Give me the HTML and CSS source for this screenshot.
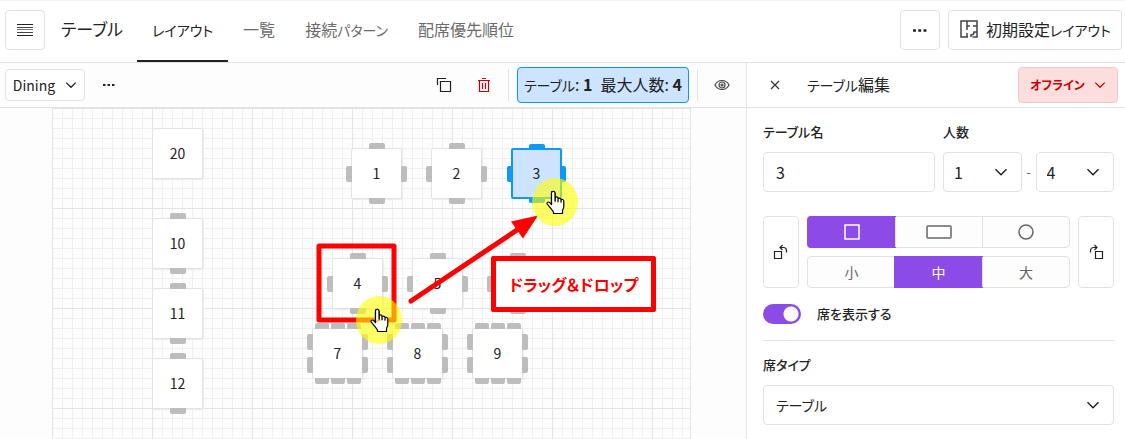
FILE: index.html
```html
<!DOCTYPE html>
<html lang="ja">
<head>
<meta charset="utf-8">
<title>テーブル</title>
<link rel="stylesheet" href="styles.css">
</head>
<body>
<svg class="defs" width="0" height="0" aria-hidden="true">
  <symbol id="chevron" viewBox="0 0 14 14"><path d="M1.500 4.200 7 9.700l5.500-5.500" fill="none" stroke="currentColor" stroke-width="1.500"/></symbol>
  <symbol id="dots" viewBox="0 0 12 4"><path d="M0 1h2.500v2H0zM4.500 1H7v2H4.500zM9 1h2.500v2H9z" fill="currentColor"/></symbol>
  <symbol id="hand" viewBox="0 0 19 25"><path d="M5.500 14.500V3.200C5.500.6 9 .6 9 3.200V9.500M9 11.500V8.200c0-1.700 2.800-1.700 3 0v3.600M12 9.300c.3-1.600 2.800-1.500 3 .2v2.700M15 10.300c.5-1.400 2.800-1 2.800.7v5.500c0 1.800-1.300 3-1.300 4.500v2.500H7.500v-1.500C6 19.500 3.200 16.500 1.300 14.200c-1-1.500.8-2.800 2.200-1.800l2 2.100" fill="#fff" stroke="#000" stroke-width="1.200" stroke-linejoin="round" stroke-linecap="round"/><path d="M5.500 14V3.200C5.500.6 9 .6 9 3.200V11" fill="#fff" stroke="#000" stroke-width="1.200"/></symbol>
</svg>

<header class="topbar">
  <button class="btn icon-btn" aria-label="メニュー">
    <svg width="16" height="13" viewBox="0 0 16 13"><path d="M0 .5h16M0 11.500h16" stroke="#222"/><path d="M0 3.500h16M0 8.500h16" stroke="#444"/><path d="M0 5.500h16" stroke="#777"/></svg>
  </button>
  <h1 class="title">テーブル</h1>
  <nav class="tabs">
    <a class="tab active" href="#layout"><span class="kana">レイアウト</span></a>
    <a class="tab" href="#list">一覧</a>
    <a class="tab" href="#patterns">接続<span class="kana">パターン</span></a>
    <a class="tab" href="#priority">配席優先順位</a>
  </nav>
  <div class="actions">
    <button class="btn icon-btn" aria-label="その他"><svg width="14" height="5"><use href="#dots"/></svg></button>
    <button class="btn preset">
      <svg width="18" height="18" viewBox="0 0 18 18" fill="none" stroke="#444" stroke-width="1.500"><path d="M12.500 17H17v-5h-3c0 2-1 3-3 3v2M17 12V1H1v16h7M7 17v-4M7 1v9M7 6h3M13 6h4"/></svg>
      <span>初期設定<span class="kana">レイアウト</span></span>
    </button>
  </div>
</header>

<div class="workspace">
  <main class="editor">
    <div class="toolbar">
      <button class="btn area">Dining <svg width="12" height="12"><use href="#chevron"/></svg></button>
      <button class="tool more" aria-label="エリア操作"><svg width="12" height="4"><use href="#dots"/></svg></button>
      <div class="tools">
        <button class="tool" aria-label="複製"><svg width="16" height="16" viewBox="0 0 16 16" fill="none" stroke="#222" stroke-width="1.200"><path d="M4.500 4.500h10v10h-10zM1.500 8V1.500H10"/></svg></button>
        <button class="tool" aria-label="削除"><svg width="14" height="16" viewBox="0 0 14 16" fill="none" stroke="#c00" stroke-width="1.200"><path d="M1 3.500h12M2.500 3.500v11h9v-11M5 1.500h4M5.500 6v6M8.500 6v6"/></svg></button>
        <div class="divider"></div>
        <div class="summary"><span><span class="kana">テーブル</span>: <b>1</b></span><span>最大人数: <b>4</b></span></div>
        <div class="divider"></div>
        <button class="tool" aria-label="表示"><svg width="16" height="12" viewBox="0 0 16 12" fill="none" stroke="#444" stroke-width="1.200"><path d="M1 6c3-6 11-6 14 0-3 6-11 6-14 0z"/><circle cx="8" cy="6" r="3"/><circle cx="8" cy="6" r="1"/></svg></button>
      </div>
    </div>
    <div class="stage">
      <div class="canvas">
        <div class="table t20">20</div>
        <div class="table t10">10<i class="seats top"><i></i></i><i class="seats bottom"><i></i></i></div>
        <div class="table t11">11<i class="seats top"><i></i></i><i class="seats bottom"><i></i></i></div>
        <div class="table t12">12<i class="seats top"><i></i></i><i class="seats bottom"><i></i></i></div>
        <div class="table t1">1<i class="seats top"><i></i></i><i class="seats bottom"><i></i></i><i class="seats left"><i></i></i><i class="seats right"><i></i></i></div>
        <div class="table t2">2<i class="seats top"><i></i></i><i class="seats bottom"><i></i></i><i class="seats left"><i></i></i><i class="seats right"><i></i></i></div>
        <div class="table t3 selected">3<i class="seats top"><i></i></i><i class="seats bottom"><i></i></i><i class="seats left"><i></i></i><i class="seats right"><i></i></i></div>
        <div class="table t4">4<i class="seats top"><i></i></i><i class="seats bottom"><i></i></i><i class="seats left"><i></i></i><i class="seats right"><i></i></i></div>
        <div class="table t5">5<i class="seats top"><i></i></i><i class="seats bottom"><i></i></i><i class="seats left"><i></i></i><i class="seats right"><i></i></i></div>
        <div class="table t6"><i class="seats top"><i></i></i><i class="seats bottom"><i></i></i><i class="seats left"><i></i></i><i class="seats right"><i></i></i></div>
        <div class="table large t7">7<i class="seats top"><i></i><i></i><i></i></i><i class="seats bottom"><i></i><i></i><i></i></i><i class="seats left"><i></i><i></i></i><i class="seats right"><i></i><i></i></i></div>
        <div class="table large t8">8<i class="seats top"><i></i><i></i><i></i></i><i class="seats bottom"><i></i><i></i><i></i></i><i class="seats left"><i></i><i></i></i><i class="seats right"><i></i><i></i></i></div>
        <div class="table large t9">9<i class="seats top"><i></i><i></i><i></i></i><i class="seats bottom"><i></i><i></i><i></i></i><i class="seats left"><i></i><i></i></i><i class="seats right"><i></i><i></i></i></div>

        <svg class="marks" width="640" height="331" viewBox="52 108 640 331" aria-hidden="true">
          <rect x="319" y="246" width="75" height="74" fill="none" stroke="#f00" stroke-width="5" stroke-linejoin="round"/>
          <path d="M411 301 520 228" stroke="#f00" stroke-width="5" stroke-linecap="round"/>
          <path d="M538 215.500 511 221.500 523 238.500z" fill="#f00"/>
          <ellipse cx="555" cy="202" rx="23" ry="24" fill="#ff0" fill-opacity=".6"/>
          <ellipse cx="379" cy="320" rx="23" ry="24" fill="#ff0" fill-opacity=".6"/>
          <use href="#hand" x="546" y="190" width="19" height="25"/>
          <use href="#hand" x="370" y="308" width="19" height="25"/>
        </svg>
        <div class="callout">ドラッグ＆ドロップ</div>
      </div>
    </div>
  </main>

  <aside class="panel">
    <div class="panel-head">
      <button class="tool" aria-label="閉じる"><svg width="10" height="10" viewBox="0 0 10 10" stroke="#333" stroke-width="1.200"><path d="m1 1 8 8M9 1 1 9"/></svg></button>
      <h2 class="panel-title"><span class="kana">テーブル</span>編集</h2>
      <button class="btn status">オフライン <svg width="12" height="12"><use href="#chevron"/></svg></button>
    </div>
    <form class="form">
      <div class="fields">
        <div class="field name">
          <label for="name">テーブル名</label>
          <input class="control" id="name" type="text" value="3">
        </div>
        <div class="field people">
          <label for="min">人数</label>
          <div class="range">
            <span class="select"><select class="control" id="min"><option>1</option></select><svg width="14" height="14"><use href="#chevron"/></svg></span>
            <span class="dash">-</span>
            <span class="select"><select class="control" aria-label="最大人数"><option>4</option></select><svg width="14" height="14"><use href="#chevron"/></svg></span>
          </div>
        </div>
      </div>
      <div class="shape">
        <button type="button" class="btn rotate" aria-label="左に回転"><svg width="16" height="16" viewBox="0 0 16 16" fill="none" stroke="#222" stroke-width="1.200"><path d="M1.500 7.500h7v7h-7zM7 3.500h3.500a3 3 0 0 1 3 3v2M9.500 1 7 3.500 9.500 6"/></svg></button>
        <div class="groups">
          <div class="segments">
            <button type="button" class="segment on" aria-label="正方形"><svg width="16" height="16" fill="none" stroke="currentColor" stroke-width="1.500"><rect x="1" y="1" width="14" height="14"/></svg></button>
            <button type="button" class="segment" aria-label="長方形"><svg width="26" height="16" fill="none" stroke="currentColor" stroke-width="1.500"><rect x="1" y="2" width="24" height="12" rx="1"/></svg></button>
            <button type="button" class="segment" aria-label="円形"><svg width="16" height="16" fill="none" stroke="currentColor" stroke-width="1.500"><circle cx="8" cy="8" r="7"/></svg></button>
          </div>
          <div class="segments">
            <button type="button" class="segment">小</button>
            <button type="button" class="segment on">中</button>
            <button type="button" class="segment">大</button>
          </div>
        </div>
        <button type="button" class="btn rotate" aria-label="右に回転"><svg width="16" height="16" viewBox="0 0 16 16" fill="none" stroke="#222" stroke-width="1.200"><path d="M7.500 7.500h7v7h-7zM9 3.500H5.500a3 3 0 0 0-3 3v2M6.500 1 9 3.500 6.500 6"/></svg></button>
      </div>
      <label class="switch"><input type="checkbox" checked>席を表示する</label>
      <div class="field type">
        <label for="type">席タイプ</label>
        <span class="select"><select class="control kana" id="type"><option>テーブル</option></select><svg width="14" height="14"><use href="#chevron"/></svg></span>
      </div>
    </form>
  </aside>
</div>
</body>
</html>
```

FILE: styles.css
```css
* { box-sizing: border-box; }

body {
  margin: 0;
  min-height: 100vh;
  display: flex;
  flex-direction: column;
  overflow: hidden;
  background: #fff;
  color: #222;
  font: 16px/20px "Noto Sans CJK JP", sans-serif;
  font-feature-settings: "palt";
}

button, input, select {
  font: inherit;
  font-feature-settings: inherit;
  color: inherit;
}

button { padding: 0; cursor: pointer; }
svg { flex: none; display: block; }
.defs { position: absolute; }
.kana { font-size: 14px; }

.btn {
  display: flex;
  align-items: center;
  justify-content: center;
  border: 1px solid #e2e2e2;
  border-radius: 4px;
  background: #fff;
}

/* Top bar */
.topbar {
  display: flex;
  align-items: flex-start;
  height: 63px;
  padding: 9px 3px 0 5px;
  border-top: 1px solid #f4f4f4;
  border-bottom: 1px solid #e2e2e2;
}

.icon-btn { width: 40px; height: 40px; }
.title { width: 76px; margin: 0 0 0 16px; font-size: 17px; line-height: 38px; font-weight: 400; white-space: nowrap; }
.tabs { display: flex; align-self: stretch; }

.tab {
  padding: 0 15px;
  border-bottom: 2px solid transparent;
  color: #6b6b6b;
  line-height: 38px;
  text-decoration: none;
  white-space: nowrap;
}

.tab.active { color: #222; border-color: #222; }
.actions { display: flex; gap: 8px; margin-left: auto; }
.preset { height: 40px; padding: 0 10px 2px 11px; gap: 8px; white-space: nowrap; }

/* Workspace */
.workspace { display: flex; flex: 1; }
.editor { flex: 1; min-width: 0; display: flex; flex-direction: column; background: #fdfdfd; }

.toolbar {
  display: flex;
  align-items: center;
  height: 45px;
  padding: 0 4px 0 5px;
  border-bottom: 1px solid #e2e2e2;
}

.area { width: 80px; height: 32px; gap: 10px; font-size: 14px; }

.tool {
  display: flex;
  align-items: center;
  justify-content: center;
  width: 40px;
  height: 32px;
  border: 0;
  background: none;
}

.more { margin-left: 4px; }
.tools { display: flex; align-items: center; margin-left: auto; }
.divider { width: 1px; height: 32px; margin: 0 8px 0 4px; background: #e2e2e2; }
.summary + .divider { margin: 0 4px 0 8px; }

.summary {
  display: flex;
  align-items: center;
  gap: 8px;
  height: 36px;
  padding: 0 6px 2px;
  border: 1px solid #0d99ee;
  border-radius: 4px;
  background: #cce4ff;
  white-space: nowrap;
}

.stage { flex: 1; display: flex; padding: 0 55px 0 52px; }

.canvas {
  position: relative;
  flex: 1;
  border-left: 1px solid #e4e4e4;
  border-right: 1px solid #e4e4e4;
  background:
    linear-gradient(90deg, #e4e4e4 1px, transparent 1px) -1px 0 / 100px 100px,
    linear-gradient(#e4e4e4 1px, transparent 1px) 0 0 / 100px 100px,
    linear-gradient(90deg, #f0f0f0 1px, transparent 1px) -1px 0 / 10px 10px,
    linear-gradient(#f0f0f0 1px, transparent 1px) 0 0 / 10px 10px;
}

/* Floor plan tables */
.table {
  position: absolute;
  display: flex;
  align-items: center;
  justify-content: center;
  width: 51px;
  height: 51px;
  padding-bottom: 2px;
  border: 1px solid #e4e4e4;
  border-radius: 2px;
  background: #fff;
  box-shadow: 1px 1px 1px #ececec;
  font-size: 14px;
}

.selected { border: 2px solid #0d99f5; background: #cce4ff; box-shadow: none; }
.t20 { left: 99px; top: 20px; }
.t10 { left: 99px; top: 110px; }
.t11 { left: 99px; top: 180px; }
.t12 { left: 99px; top: 250px; }
.t1 { left: 298px; top: 40px; }
.t2 { left: 378px; top: 40px; }
.t3 { left: 458px; top: 40px; }
.t4 { left: 279px; top: 150px; }
.t5 { left: 359px; top: 150px; }
.t6 { left: 439px; top: 150px; }
.t7 { left: 259px; top: 220px; }
.t8 { left: 339px; top: 220px; }
.t9 { left: 419px; top: 220px; }

.seats { position: absolute; display: flex; justify-content: center; gap: 2px; }
.seats i { width: 16px; height: 6px; background: #bdbdbd; border-radius: 2px 2px 0 0; }
.large .seats i { width: 14px; }
.top, .bottom { left: 0; right: 0; }
.top { bottom: 100%; }
.bottom { top: 100%; }
.seats.bottom i { border-radius: 0 0 2px 2px; }
.left, .right { top: 0; bottom: 0; flex-direction: column; }
.seats.left, .seats.right { gap: 7px; }
.left { right: 100%; }
.right { left: 100%; }
.table .seats.left i, .table .seats.right i { width: 6px; height: 16px; border-radius: 2px 0 0 2px; }
.table .seats.right i { border-radius: 0 2px 2px 0; }
.selected .seats i { background: #0d99f5; }

.marks { position: absolute; left: -1px; top: 0; }

.callout {
  position: absolute;
  left: 438px;
  top: 148px;
  padding: 13px;
  border: 5px solid #f00;
  border-radius: 2px;
  background: #fff;
  color: #f00;
  font-weight: 700;
  line-height: 20px;
  white-space: nowrap;
}

/* Side panel */
.panel { width: 379px; border-left: 1px solid #e2e2e2; }

.panel-head {
  display: flex;
  align-items: center;
  height: 45px;
  padding: 0 7px 0 8px;
  border-bottom: 1px solid #e2e2e2;
}

.panel-title { margin: 0 0 0 12px; padding-bottom: 2px; font-size: 16px; font-weight: 400; }

.status {
  width: 100px;
  height: 36px;
  margin-left: auto;
  gap: 9px;
  border-color: #f5c9c9;
  background: #fddede;
  color: #c00;
  font-size: 12px;
  font-weight: 700;
}

.form { padding: 14px 11px 0 16px; }
.fields { display: flex; gap: 8px; }
.field { display: flex; flex-direction: column; gap: 10px; font-size: 13px; font-weight: 500; }
.name { flex: 1; min-width: 0; }
.people { width: 171px; }

.control {
  width: 100%;
  height: 40px;
  padding: 0 12px;
  border: 1px solid #e2e2e2;
  border-radius: 4px;
  background: #fff;
  font-size: 16px;
  font-weight: 400;
  appearance: none;
}

.control.kana { font-size: 14px; }
.people .control { padding: 0 10px; }
.range { display: flex; align-items: center; }
.dash { width: 14px; text-align: center; color: #666; font-weight: 400; }
.select { flex: 1; display: grid; align-items: center; }
.select > * { grid-area: 1 / 1; }
.select svg { justify-self: end; margin-right: 14px; pointer-events: none; }

.shape { display: flex; gap: 8px; margin-top: 24px; }
.rotate { width: 36px; }
.groups { flex: 1; display: grid; gap: 8px; }

.segments {
  display: grid;
  grid-template-columns: repeat(3, 1fr);
  height: 32px;
  border: 1px solid #e2e2e2;
  border-radius: 4px;
  background: #fdfdfd;
}

.segment {
  display: flex;
  align-items: center;
  justify-content: center;
  border: 0;
  background: none;
  color: #666;
  font-size: 14px;
}

.segment + .segment { border-left: 1px solid #e2e2e2; }
.segment.on { margin: -1px; border: 0; background: #8c4ae6; color: #fff; }
.segment.on:first-child { border-radius: 4px 0 0 4px; }

.switch {
  display: flex;
  align-items: center;
  gap: 16px;
  padding: 16px 0;
  font-size: 13px;
  font-weight: 500;
  border-bottom: 1px solid #e2e2e2;
}

.switch input {
  width: 38px;
  height: 20px;
  margin: 0;
  border-radius: 10px;
  background: radial-gradient(circle at 28px 10px, #fafafa 7px, #8c4ae6 8px);
  appearance: none;
}

.type { padding: 14px 0; }
```
